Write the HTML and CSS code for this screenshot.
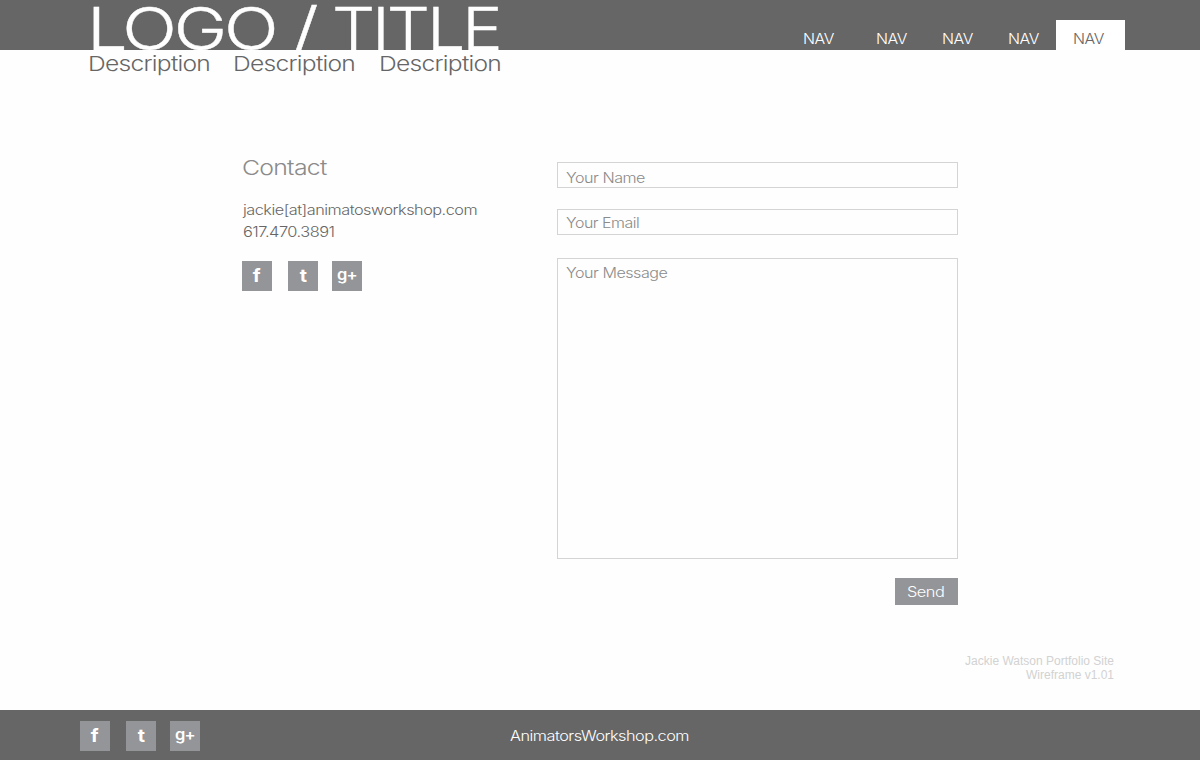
FILE: index.html
```html
<!DOCTYPE html>
<html lang="en">
<head>
<meta charset="utf-8">
<title>Contact</title>
<link rel="stylesheet" href="styles.css">
</head>
<body>
<header class="top">
  <div class="brand">
    <h1 class="logo"><span class="logo-a">LOGO</span><span class="logo-b">/</span><span class="logo-c">TITLE</span></h1>
    <div class="tagline"><span>Description</span><span>Description</span><span>Description</span></div>
  </div>
  <nav class="nav">
    <a class="n1"><span>NAV</span></a><a class="n2"><span>NAV</span></a><a class="n3"><span>NAV</span></a><a class="n4"><span>NAV</span></a><a class="active"><span>NAV</span></a>
  </nav>
</header>
<main class="main">
  <section class="contact">
    <h2><span>Contact</span></h2>
    <p class="email"><span>jackie[at]animatosworkshop.com</span></p>
    <p class="phone"><span>617.470.3891</span></p>
    <div class="social"><a><span>f</span></a><a class="tw"><span>t</span></a><a class="gp"><span>g+</span></a></div>
  </section>
  <form class="form">
    <div class="field name"><span>Your Name</span></div>
    <div class="field mail"><span>Your Email</span></div>
    <div class="field message"><span>Your Message</span></div>
    <div class="send"><span>Send</span></div>
  </form>
</main>
<div class="note">Jackie Watson Portfolio Site<br>Wireframe v1.01</div>
<footer class="footer">
  <div class="social"><a><span>f</span></a><a class="tw"><span>t</span></a><a class="gp"><span>g+</span></a></div>
  <div class="site"><span>AnimatorsWorkshop.com</span></div>
</footer>
</body>
</html>
```
FILE: styles.css
```css
* { box-sizing: border-box; }
body {
  margin: 0;
  width: 1200px;
  height: 760px;
  display: flex;
  flex-direction: column;
  overflow: hidden;
  background: #fefefe;
  color: #666;
  font: 300 14px/20px Inter, sans-serif;
}
h1, h2, p { margin: 0; font-weight: 300; }
span {
  display: inline-block;
  white-space: nowrap;
  letter-spacing: -0.03em;
  transform: scaleX(1.16);
  transform-origin: left;
}

.top {
  height: 50px;
  display: flex;
  background: #666;
  flex: none;
}
.brand { width: 780px; padding-left: 87px; }
.logo {
  display: flex;
  height: 50px;
  font-size: 59px;
  line-height: 58px;
  color: #fefefe;
  -webkit-text-stroke: 0.4px #fefefe;
}
.logo span { letter-spacing: -0.045em; }
.logo .logo-a { width: 205px; transform: scaleX(1.22); }
.logo .logo-b { width: 40px; transform: scaleX(1.3); }
.logo .logo-c { transform: scaleX(1.15); }
.tagline {
  display: flex;
  padding: 1px 0 0 0.5px;
  font-size: 20.5px;
  line-height: 26px;
}
.tagline span { width: 145.5px; transform: scaleX(1.2); }

.nav {
  display: flex;
  align-items: flex-end;
  color: #fff;
}
.nav a { height: 30px; padding-top: 9px; }
.nav span { transform: scaleX(1.13); }
.n1 { width: 96px; padding-left: 23px; }
.n2, .n3 { width: 66px; }
.n4 { width: 48px; }
.nav .active {
  width: 69px;
  padding-left: 17px;
  background: #fff;
  color: #666;
}

.main {
  display: flex;
  height: 604px;
  padding-left: 242px;
}
.contact { width: 315px; padding-top: 105px; }
.contact h2 { font-size: 20.5px; line-height: 26px; color: #8b8b8b; }
.contact h2 span { transform: scaleX(1.21); }
.email { margin-top: 19px; padding-left: 0.5px; }
.email span { transform: scaleX(1.16); }
.phone { margin-top: 2px; padding-left: 0.5px; }
.phone span { transform: scaleX(1.17); }

.social { display: flex; }
.contact .social { margin-top: 19px; }
.social a {
  width: 30px;
  height: 30px;
  margin-right: 16px;
  background: #939598;
  color: #fff;
  font-size: 18px;
  font-weight: 700;
  line-height: 30px;
  text-align: center;
}
.social span { transform-origin: center; letter-spacing: 0; transform: scaleX(1.1); }
.social .tw { margin-right: 14px; }
.social .gp { margin-right: 0; font-size: 15px; line-height: 28px; font-weight: 600; }
.social .gp span { letter-spacing: -0.06em; }

.form {
  width: 401px;
  padding-top: 112px;
  display: flex;
  flex-direction: column;
}
.field {
  height: 26px;
  padding-left: 8px;
  border: 1px solid #d3d4d5;
  color: #8b8b8b;
}
.name { padding-top: 5px; }
.name span, .message span { transform: scaleX(1.15); }
.mail { margin-top: 21px; padding-top: 3px; }
.mail span { transform: scaleX(1.14); }
.message { margin-top: 23px; height: 301px; padding-top: 4px; }
.send {
  align-self: flex-end;
  width: 63px;
  height: 27px;
  margin-top: 19px;
  padding: 4px 0 0 12px;
  background: #939598;
  color: #fff;
}
.send span { transform: scaleX(1.17); }

.note {
  height: 56px;
  padding-right: 86px;
  text-align: right;
  font: 12px/14px "Liberation Sans", Arial, sans-serif;
  color: #d2d2d2;
}
.footer {
  height: 50px;
  flex: none;
  display: flex;
  padding: 11px 0 0 80px;
  background: #666;
  color: #fff;
}
.footer .social { width: 430px; }
.site { padding-top: 5px; }
```
